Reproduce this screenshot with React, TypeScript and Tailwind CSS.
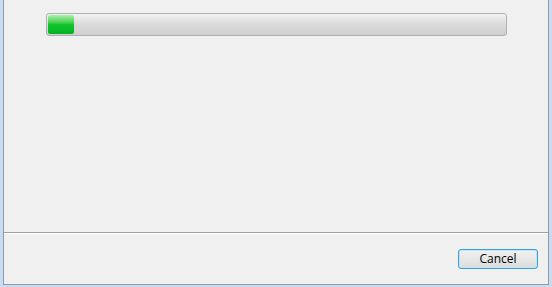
export default function App() {
  return (
    <div className="h-[287px] w-[552px] overflow-hidden bg-[#c9dbef] pl-[3px] pr-[3px] pb-[2px] font-['Open_Sans',sans-serif]">
      <div className="flex h-full flex-col border-x border-b border-[#8a99ab] bg-[#f0f0f0]">
        {/* Progress panel */}
        <div className="h-[232px] pl-[42px] pr-[41px] pt-[13px]">
          <div className="h-[23px] rounded-[3px] border border-[#b0b0b0] bg-gradient-to-b from-[#f3f3f3] via-[#dadada] to-[#cfcfcf] p-px">
            <div className="h-full w-[26px] rounded-[2px] bg-gradient-to-b from-[#a6f0a8] via-[#11c52d] to-[#06b025]" />
          </div>
        </div>
        <div className="h-px bg-[#a0a0a0]" />
        <div className="h-px bg-white" />
        {/* Buttons */}
        <div className="flex flex-1 justify-end pr-[10px] pt-[15px]">
          <button className="h-[20px] w-[80px] rounded-[3px] border border-[#3c9fd6] bg-gradient-to-b from-[#f2f2f2] to-[#dcdcdc] text-[12px] leading-none text-black shadow-[inset_0_0_0_1px_#bfe6f8]">
            Cancel
          </button>
        </div>
      </div>
    </div>
  );
}
